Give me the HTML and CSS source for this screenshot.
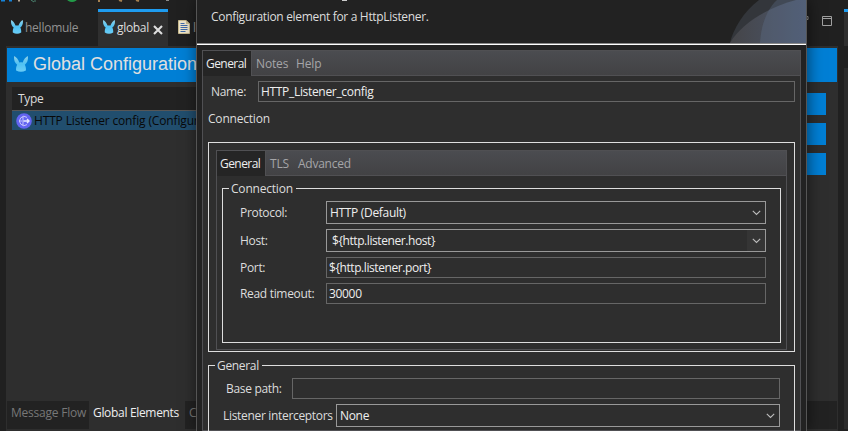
FILE: index.html
```html
<!DOCTYPE html>
<html lang="en"><head><meta charset="utf-8"><title>Global Configuration</title><link rel="stylesheet" href="styles.css"></head>
<body>
<svg class="defs" width="0" height="0"><defs>
<linearGradient id="blue" x1="0" y1="0" x2="0" y2="1"><stop offset="0" stop-color="#8fcfe6"/><stop offset=".5" stop-color="#4fc1f3"/><stop offset="1" stop-color="#6bcdf6"/></linearGradient>
<symbol id="mule" viewBox="0 0 12 14" preserveAspectRatio="none"><path d="M.2 0C1.6 .8 3.8 2.8 4.5 5.6Q6 5.2 7.5 5.6C8.2 2.8 10.4 .8 11.8 0C12.4 2.6 11.6 5.8 9.3 7.6C9.9 8.8 10.4 10.6 10.2 12.6Q6 15 1.8 12.6C1.6 10.6 2.1 8.8 2.7 7.6C.4 5.8-.4 2.6 .2 0Z" fill="url(#blue)"/></symbol>
<symbol id="chevron" viewBox="0 0 9 6"><path d="M.8.8L4.5 4.5L8.2.8" fill="none" stroke="#bdbdbd" stroke-width="1.1"/></symbol>
</defs></svg>
<div class="ide">
  <div class="toolbar"><svg width="212" height="3"><path d="M1 0h4M9 0h3" stroke="#1683d8" stroke-width="3"/><path d="M18 0h2" stroke="#b8a58f" stroke-width="3"/><path d="M31 0l3 2M35 0v2" stroke="#4b8370" fill="none"/><ellipse cx="72" cy="-1" rx="5" ry="3" fill="#229b48"/><path d="M99 0v2M119 0l3 1M136 0l3 1" stroke="#a68150" stroke-width="2"/><path d="M166 0h3" stroke="#8b8b8b" stroke-width="2"/></svg></div>
  <div class="tabs">
    <div class="tab first"><svg class="mule"><use href="#mule"/></svg><span class="t-hello">hellomule</span></div>
    <div class="tab current"><svg class="mule"><use href="#mule"/></svg><span class="t-global">global</span><svg class="close" viewBox="0 0 10 10"><path d="M1 1L9 9M9 1L1 9" stroke="#dedede" stroke-width="2.1"/></svg></div>
    <div class="tab third"><svg width="12" height="14"><path d="M1 .5h7l3.5 3.5v9.5H.5V.5Z" fill="#eee5cb" stroke="#c7b98d"/><path d="M8 0v4h4" fill="#c7b98d"/><path d="M2.5 3.5h4M2.5 5.5h7M2.5 7.5h7M2.5 9.5h7M2.5 11.5h5" stroke="#416ba8"/></svg><span>log4j2</span></div>
    <svg class="window" width="46" height="12"><path d="M0 .5h6v3H0M20.5.5h9v9h-9ZM20.5 2.5h9" fill="none" stroke="#a0a0a0"/></svg>
  </div>
  <main class="editor">
    <header class="title"><svg><use href="#mule"/></svg><span>Global Configuration</span></header>
    <div class="content"><div class="table"><div class="head">Type</div><div class="row"><svg width="16" height="16"><circle cx="8" cy="8" r="7.8" fill="#6364f1"/><g fill="none" stroke="#e6e7ff"><path d="M11 4.4A4.6 4.6 0 1 0 11 11.6M7 3.6V12.4M3.5 8H6" opacity=".75"/><path d="M7.5 8H13M11 6L13 8L11 10" stroke-width="1.4"/></g></svg><span>HTTP Listener config (Configuration)</span></div></div><div class="actions"><i></i><i></i><i></i></div></div>
    <footer><span class="flow">Message Flow</span><span class="elements">Global Elements</span><span class="xml">Configuration XML</span></footer>
  </main>
  <div class="side"><i></i><div></div></div>
</div>
<section class="dialog">
  <header class="banner"><p>Configuration element for a HttpListener.</p><i class="mark"></i><svg width="76" height="43"><defs><linearGradient id="shade"><stop stop-color="#454548"/><stop offset="1" stop-color="#4b566c"/></linearGradient></defs><path d="M0 43C3 29 14 11 29 0H76V43Z" fill="#33363b"/><path d="M0 43C12 22 40 7 66 0H76V43Z" fill="url(#shade)"/><path d="M30 43C31 25 37 9 47 0H76V43Z" fill="#637795" opacity=".3"/></svg></header>
  <div class="folder">
    <nav class="subtabs"><b>General</b><span class="notes">Notes</span><span class="help">Help</span></nav>
    <div class="name"><label>Name:</label><div class="field">HTTP_Listener_config</div></div>
    <div class="caption">Connection</div>
    <div class="connection"><div class="inner">
      <nav class="subtabs"><b>General</b><span class="tls">TLS</span><span class="advanced">Advanced</span></nav>
      <fieldset class="details"><legend>Connection</legend>
        <div class="line protocol"><label>Protocol:</label><div class="field combo"><span>HTTP (Default)</span><svg><use href="#chevron"/></svg></div></div>
        <div class="line host"><label>Host:</label><div class="field combo edit"><span>${http.listener.host}</span><svg><use href="#chevron"/></svg></div></div>
        <div class="line port"><label>Port:</label><div class="field">${http.listener.port}</div></div>
        <div class="line timeout"><label>Read timeout:</label><div class="field">30000</div></div>
      </fieldset>
    </div></div>
    <fieldset class="general"><legend>General</legend><div class="base"><label>Base path:</label><div class="field"></div></div><div class="intercept"><label>Listener interceptors</label><div class="field combo"><span>None</span><svg><use href="#chevron"/></svg></div></div></fieldset>
  </div>
</section>
</body></html>
```
FILE: styles.css
```css
*{box-sizing:border-box}
body{margin:0;width:848px;height:431px;overflow:hidden;background:#202020;color:#ddd;font:12px/16px "Open Sans","Noto Sans",sans-serif;position:relative;letter-spacing:-.32px;white-space:nowrap}
svg{display:block;flex:none}
.defs{position:absolute}
.ide{height:431px;display:grid;grid-template-columns:6px 832px 10px;grid-template-rows:9px 37px 385px;overflow:hidden}
.toolbar{grid-column:1/3;grid-row:1;height:9px}
.tabs{grid-column:1/3;grid-row:2;display:flex;height:37px;position:relative}
.tab{display:flex;align-items:center;height:37px;color:#929292}
.first{width:98px;padding-left:11px}
.t-hello{letter-spacing:-.25px}
.mule{width:12px;height:14px;margin-right:2px;margin-top:-2px}
.current{width:70px;border-top:3px solid #1e9cf0;background:#2f2f2f;color:#ddd;padding-left:5px}
.current .mule{margin-top:-5px}
.current span{margin-top:-2px}
.close{width:10px;height:10px;margin-left:4px;margin-top:1px}
.third{padding-left:10px;gap:3px}
.third svg{margin-top:-2px}
.window{position:absolute;left:802px;top:7px}
.editor{grid-column:2;grid-row:3;background:#2e2e2e;height:385px;padding:2px 1px 2px;display:flex;flex-direction:column}
.title{height:34px;background:#007fd5;display:flex;align-items:center;padding-left:7px;font:18px/30px "Liberation Sans",sans-serif;letter-spacing:0;color:#e0e0e0}
.title svg{width:14px;height:16px;margin-right:5px;margin-top:-2px}
.title span{margin-top:-2px}
.content{height:328px;display:flex;padding:5px 11px 0 5px;justify-content:space-between;flex:1}
.table{width:500px}
.head{height:24px;background:#222;border-bottom:1px solid #575757;line-height:24px;padding-left:6px}
.row{height:19px;background:#214e6e;color:#080808;display:flex;align-items:center;padding-left:4px;gap:2px;letter-spacing:-.15px}
.actions{width:60px;padding-top:6px;display:grid;grid-template-rows:22px 22px 22px;gap:8px;align-content:start}
.actions i{background:#007fd5}
footer{display:flex;background:#222;height:28px;line-height:23px;color:#777}
footer span{padding-left:4px}
.flow{width:82px;letter-spacing:-.22px}
.elements{width:96px;background:#2e2e2e;color:#eee}
.side{grid-column:3;grid-row:2/4;margin:0 0 2px 6px;display:flex;flex-direction:column}
.side i{height:37px;background:#2f2f2f;border-top:3px solid #1e9cf0;margin-bottom:22px}
.side div{flex:1;background:#2b2b2b}
.dialog{position:absolute;left:196px;top:0;width:611px;height:431px;background:#222;border:1px solid #555;border-top:0;border-bottom:0;box-shadow:1px 0 14px #0008;overflow:hidden}
.banner{height:45px;display:flex;border-bottom:1px solid #fff;box-shadow:inset 0 -1px #888}
.banner p{margin:9px 0 0 14px;width:131px}
.banner svg{margin-left:auto}
.mark{width:5px;height:1px;background:#ccc}
.folder{margin:5px 5px 0;height:381px;border:1px solid #505053;background:#2e2e2e;padding:0 5px 0 5px}
.subtabs{display:flex;align-items:center;height:25px;background:linear-gradient(#4b4c50,#424244);border-bottom:1px solid #505053;color:#a5a5a8;letter-spacing:-.15px}
.subtabs span{padding-top:2px}
.folder>.subtabs{margin:0 -5px}
.subtabs b{font-weight:400;color:#eee;background:#252525;width:49px;height:25px;line-height:25px;padding-left:3px;border-right:1px solid #505053;letter-spacing:-.55px}
.notes{padding-left:4px;width:44px}.help{width:50px}
.name{display:flex;height:30px;padding:5px 0 0 3px}
.name label{width:47px;line-height:22px}
.field{height:21px;border:1px solid #666;background:#2e2e2e;color:#eee;padding-left:2px;line-height:19px;flex:1}
.caption{height:36px;padding:5px 0 0;letter-spacing:-.2px}
.connection{height:210px;border:1px solid #ddd;padding:7px 7px 1px}
.inner{height:200px;border:1px solid #505053;padding:0 5px}
.inner .subtabs{margin:0 -5px}
.tls{padding-left:4px;width:32px}
.advanced{letter-spacing:-.25px}
fieldset{border:1px solid #ddd;margin:0;padding:0;min-width:0}
legend{padding:0 3px 0 2px;margin-left:6px;height:16px;line-height:18px}
.details{height:163px;margin-top:4px;padding:5px 14px 0 17px}
.details legend{margin-left:-11px;letter-spacing:-.2px}
.line{display:flex;align-items:start}
.line label{width:86px;line-height:22px}
.line:is(.protocol,.host) label{line-height:24px}
.combo{height:23px;border-color:#999;display:flex;align-items:center;justify-content:space-between;padding:0 4px 0 3px}
.combo svg{width:9px;height:6px}
.protocol,.host{height:28px}.port,.timeout{height:26px}
.host .field,.port .field{letter-spacing:-.42px}
.edit{padding-left:5px;background:linear-gradient(90deg,#2e2e2e 420px,#353535 420px)}
.general{height:120px;margin-top:5px;padding:5px 14px 0}
.general legend{margin-left:-8px}
.base,.intercept{display:flex}
.base{height:26px;padding-left:3px}.base label{width:66px;line-height:22px}
.intercept label{width:113px;line-height:23px}
```
